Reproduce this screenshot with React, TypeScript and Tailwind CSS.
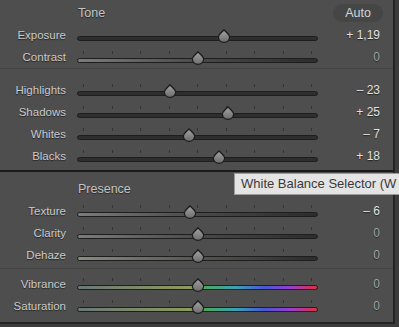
import React from 'react';

type Row = {
  label: string;
  value: string;
  pos: number; // 0..1 along the track
  track: string;
  ticks?: boolean;
};

const plain = 'bg-[#2e2e2e]';
const fade = 'bg-[linear-gradient(to_right,#7c7c7c,#4a4a4a_50%,#2c2c2c)]';
const haze = 'bg-[linear-gradient(to_right,#8a8c7c,#55564e_50%,#2c2c2c)]';
const hue =
  'bg-[linear-gradient(to_right,#6a7878_0%,#8c9a5c_46%,#4aa85c_53%,#3aa2b4_66%,#4858d6_78%,#9a3ed0_89%,#e0303e_100%)]';

const tone: Row[] = [
  { label: 'Exposure', value: '+ 1,19', pos: 0.611, track: plain, ticks: false },
  { label: 'Contrast', value: '0', pos: 0.5, track: fade },
];

const tone2: Row[] = [
  { label: 'Highlights', value: '– 23', pos: 0.385, track: plain },
  { label: 'Shadows', value: '+ 25', pos: 0.625, track: plain },
  { label: 'Whites', value: '– 7', pos: 0.465, track: plain },
  { label: 'Blacks', value: '+ 18', pos: 0.59, track: plain },
];

const presence: Row[] = [
  { label: 'Texture', value: '– 6', pos: 0.47, track: fade },
  { label: 'Clarity', value: '0', pos: 0.5, track: fade },
  { label: 'Dehaze', value: '0', pos: 0.5, track: haze },
];

const color: Row[] = [
  { label: 'Vibrance', value: '0', pos: 0.5, track: hue },
  { label: 'Saturation', value: '0', pos: 0.5, track: hue },
];

const TICKS = [0, 1, 2, 3, 4, 5, 6, 7, 8];

function Thumb() {
  return (
    <svg width="14" height="14" viewBox="0 0 14 14">
      <defs>
        <linearGradient id="thumbFill" x1="0" y1="0" x2="0" y2="1">
          <stop offset="0" stopColor="#a4a4a4" />
          <stop offset="1" stopColor="#6c6c6c" />
        </linearGradient>
      </defs>
      <path
        d="M7 0.8 C8.6 3, 12.6 5.2, 12.6 8.2 A5.6 5.2 0 0 1 1.4 8.2 C1.4 5.2, 5.4 3, 7 0.8 Z"
        fill="url(#thumbFill)"
        stroke="#1c1c1c"
        strokeWidth="1.2"
      />
    </svg>
  );
}

function Slider({ row }: { row: Row }) {
  const zero = row.value === '0';
  return (
    <div className="flex h-[22px] items-start">
      <div className="w-[66px] shrink-0 pt-[4px] text-right text-[11.5px] leading-[14px] text-[#cacaca] [text-shadow:0_1px_1px_rgba(0,0,0,0.55)]">
        {row.label}
      </div>
      <div className="relative ml-[11px] h-full w-[241px] shrink-0">
        {row.ticks !== false &&
          TICKS.map((i) => (
            <div
              key={i}
              className="absolute top-[5px] h-[3px] w-px bg-[#343434]"
              style={{ left: 6 + i * 28.5 }}
            />
          ))}
        <div
          className={`absolute left-0 right-0 top-[12px] h-[5px] rounded-full border border-[#1e1e1e] ${row.track}`}
        />
        <div className="absolute top-[5px]" style={{ left: row.pos * 241 - 7 }}>
          <Thumb />
        </div>
      </div>
      <div
        className={`ml-auto w-[60px] pr-[13px] pt-[4px] text-right text-[12px] leading-[14px] [text-shadow:0_1px_1px_rgba(0,0,0,0.55)] ${
          zero ? 'text-[#a2a2a2]' : 'text-[#e2e2e2]'
        }`}
      >
        {row.value}
      </div>
    </div>
  );
}

export default function App() {
  return (
    <div className="relative h-[327px] w-[399px] overflow-hidden bg-[#3c3c3c] font-['Liberation_Sans',Arial,sans-serif]">
      <div className="h-[324px] w-[395px] border-b-2 border-r-2 border-[#242424] bg-[#4e4e4e]">
        {/* Tone */}
        <div className="flex h-[24px] items-center pt-[2px]">
          <div className="ml-[78px] text-[12.5px] text-[#c4c4c4] [text-shadow:0_1px_1px_rgba(0,0,0,0.55)]">
            Tone
          </div>
          <div className="ml-auto mr-[10px] flex h-[18px] w-[50px] items-center justify-center rounded-full bg-[#464646] text-[12.5px] text-[#d4d4d4]">
            Auto
          </div>
        </div>
        {tone.map((r) => (
          <Slider key={r.label} row={r} />
        ))}
        <div className="h-px bg-[#444444]" />
        <div className="pt-[10px]">
          {tone2.map((r) => (
            <Slider key={r.label} row={r} />
          ))}
        </div>

        <div className="mt-[3px] h-[2px] bg-[#1a1a1a]" />

        {/* Presence */}
        <div className="flex h-[28px] items-center">
          <div className="ml-[78px] pt-[7px] text-[12.5px] text-[#c4c4c4] [text-shadow:0_1px_1px_rgba(0,0,0,0.55)]">
            Presence
          </div>
        </div>
        {presence.map((r) => (
          <Slider key={r.label} row={r} />
        ))}
        <div className="mt-[2px] h-px bg-[#444444]" />
        <div className="pt-[4px]">
          {color.map((r) => (
            <Slider key={r.label} row={r} />
          ))}
        </div>
      </div>

      {/* tooltip */}
      <div className="absolute left-[234px] top-[173px] h-[22px] w-[180px] border border-[#9a9a9a] bg-[#e4e4e4] pl-[6px] text-[13px] leading-[20px] whitespace-nowrap text-[#3a3a3a]">
        White Balance Selector (W
      </div>
    </div>
  );
}
